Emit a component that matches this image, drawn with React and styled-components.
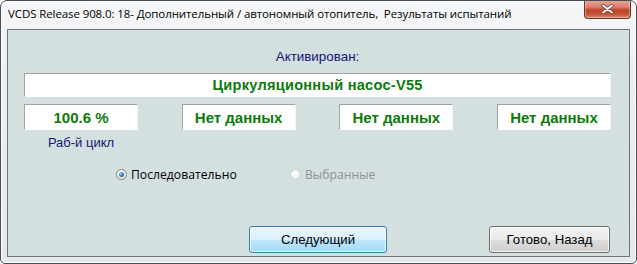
import React from 'react'
import styled, { createGlobalStyle } from 'styled-components'

const GlobalStyle = createGlobalStyle`
  html, body {
    margin: 0;
    padding: 0;
    background: #ffffff;
  }
  body {
    font-family: "Liberation Sans", Arial, sans-serif;
  }
`

const Window = styled.div`
  box-sizing: border-box;
  width: 637px;
  height: 264px;
  display: flex;
  flex-direction: column;
  border: 1px solid #4a4f55;
  border-radius: 7px 7px 5px 5px;
  background: linear-gradient(180deg, #f6f7f8 0%, #eceef0 30%, #e6e8ea 100%);
  box-shadow: inset 0 0 0 1px #fbfcfd;
  overflow: hidden;
`

const TitleBar = styled.div`
  height: 28px;
  display: flex;
  align-items: flex-start;
  justify-content: space-between;
  padding-left: 7px;
`

const Title = styled.div`
  margin-top: 5px;
  font-family: "Open Sans", "Noto Sans", sans-serif;
  font-size: 11.5px;
  color: #000;
  white-space: pre;
  letter-spacing: -0.1px;
`

const CloseButton = styled.div`
  box-sizing: border-box;
  width: 47px;
  height: 19px;
  margin-top: -1px;
  margin-right: 5px;
  border: 1px solid #6b3328;
  border-top: none;
  border-radius: 0 0 4px 4px;
  background: linear-gradient(180deg, #e9a897 0%, #d8806b 40%, #c2432b 55%, #c7553b 80%, #dc8a6f 100%);
  box-shadow: inset 0 0 0 1px rgba(255, 255, 255, 0.35);
  display: flex;
  align-items: center;
  justify-content: center;
`

const Client = styled.div`
  flex: 1;
  margin: 0 6px 6px 6px;
  border: 1px solid #6e7575;
  background: #d4e0e0;
  display: flex;
  flex-direction: column;
  padding: 0 18px 0 16px;
`

const Caption = styled.div`
  margin-top: 19px;
  text-align: center;
  font-size: 13.4px;
  color: #15157a;
  line-height: 15px;
`

const Field = styled.div`
  box-sizing: border-box;
  height: ${p => p.$h}px;
  width: ${p => p.$w ? `${p.$w}px` : 'auto'};
  background: #ffffff;
  border-top: 1px solid #a3a3a3;
  border-left: 1px solid #a3a3a3;
  border-right: 1px solid #f4f4f4;
  border-bottom: 1px solid #ffffff;
  display: flex;
  align-items: center;
  justify-content: center;
  font-weight: bold;
  font-size: 15px;
  color: #0d7a0d;
`

const WideField = styled(Field)`
  margin-top: 9px;
  font-size: 14.6px;
  letter-spacing: 0.25px;
`

const BoxRow = styled.div`
  margin-top: 7px;
  display: flex;
  justify-content: space-between;
`

const LabelRow = styled.div`
  display: flex;
`

const SmallLabel = styled.div`
  width: 114px;
  text-align: center;
  margin-top: 6px;
  font-size: 13px;
  line-height: 14px;
  color: #15157a;
`

const RadioRow = styled.div`
  margin-top: 16px;
  margin-left: 92px;
  display: flex;
  align-items: center;
`

const RadioOption = styled.label`
  display: flex;
  align-items: center;
  gap: 4px;
  font-family: "Open Sans", "Noto Sans", sans-serif;
  font-size: 12.2px;
  color: ${p => p.$disabled ? '#8d9393' : '#000'};
  width: ${p => p.$w}px;
`

const RadioCircle = styled.span`
  box-sizing: border-box;
  width: 11px;
  height: 11px;
  border-radius: 50%;
  border: 1px solid ${p => p.$disabled ? '#c8cccc' : '#7c8185'};
  background: ${p => p.$disabled
    ? 'radial-gradient(circle at 40% 35%, #ffffff, #e6e8e8)'
    : 'radial-gradient(circle at 40% 35%, #ffffff, #dcdfe2)'};
  display: flex;
  align-items: center;
  justify-content: center;

  &::after {
    content: '';
    display: ${p => p.$checked ? 'block' : 'none'};
    width: 5px;
    height: 5px;
    border-radius: 50%;
    background: radial-gradient(circle at 35% 35%, #8ed0f5, #1b5f9e 70%, #0f3f74);
  }
`

const ButtonRow = styled.div`
  margin-top: auto;
  margin-bottom: 3px;
  display: flex;
  align-items: center;
`

const Button = styled.div`
  box-sizing: border-box;
  height: 27px;
  width: ${p => p.$w}px;
  margin-left: ${p => p.$ml}px;
  border-radius: 3px;
  border: 1px solid ${p => p.$focused ? '#3c7fb1' : '#707070'};
  background: ${p => p.$focused
    ? 'linear-gradient(180deg, #eaf6fd 0%, #d9f0fc 50%, #bee6fd 50%, #a7d9f5 100%)'
    : 'linear-gradient(180deg, #f2f2f2 0%, #ebebeb 50%, #dddddd 50%, #cfcfcf 100%)'};
  box-shadow: inset 0 0 0 1px rgba(255, 255, 255, 0.7);
  display: flex;
  align-items: center;
  justify-content: center;
  font-family: "Liberation Sans", Arial, sans-serif;
  font-size: 13.2px;
  color: #000;
`

function CloseGlyph() {
  return (
    <svg width="13" height="10" viewBox="0 0 13 10">
      <path d="M2 1.5 L11 8.5 M11 1.5 L2 8.5" stroke="#6a3a32" strokeWidth="3.4" strokeLinecap="round" />
      <path d="M2 1.5 L11 8.5 M11 1.5 L2 8.5" stroke="#ffffff" strokeWidth="1.8" strokeLinecap="round" />
    </svg>
  )
}

function App() {
  const values = ['100.6 %', 'Нет данных', 'Нет данных', 'Нет данных']

  return (
    <>
      <GlobalStyle />
      <Window>
        <TitleBar>
          <Title>{'VCDS Release 908.0: 18- Дополнительный / автономный отопитель,  Результаты испытаний'}</Title>
          <CloseButton><CloseGlyph /></CloseButton>
        </TitleBar>
        <Client>
          <Caption>Активирован:</Caption>
          <WideField $h={24}>Циркуляционный насос-V55</WideField>
          <BoxRow>
            {values.map((v, i) => (
              <Field key={i} $h={26} $w={114}>{v}</Field>
            ))}
          </BoxRow>
          <LabelRow>
            <SmallLabel>Раб-й цикл</SmallLabel>
          </LabelRow>
          <RadioRow>
            <RadioOption $w={174}>
              <RadioCircle $checked />
              Последовательно
            </RadioOption>
            <RadioOption $disabled $w={120}>
              <RadioCircle $disabled />
              Выбранные
            </RadioOption>
          </RadioRow>
          <ButtonRow>
            <Button $focused $w={138} $ml={225}>Следующий</Button>
            <Button $w={121} $ml={102}>Готово, Назад</Button>
          </ButtonRow>
        </Client>
      </Window>
    </>
  )
}

export default App
